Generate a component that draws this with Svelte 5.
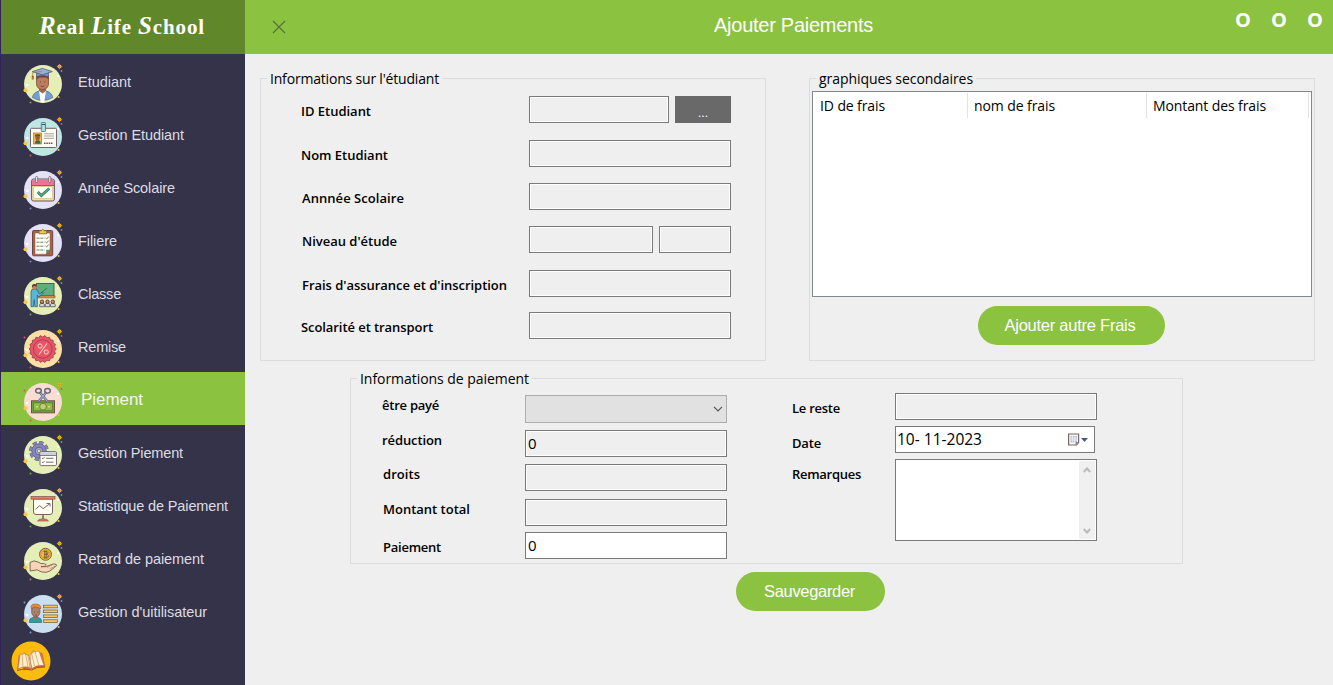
<script>
  // Tracks a run of text out or in so that it fills the given width.
  function fit(node, width) {
    const range = document.createRange();
    range.selectNodeContents(node);
    const natural = range.getBoundingClientRect().width;
    const gaps = node.textContent.length;
    node.style.letterSpacing = `${(width - natural) / gaps}px`;
  }

  const menu = [
    { icon: 'student', text: 'Etudiant', w: 53, bg: '#e6eeb7', dot: '#75a843' },
    { icon: 'card', text: 'Gestion Etudiant', w: 106, bg: '#c0e6e4', dot: '#e34b68' },
    { icon: 'calendar', text: 'Année Scolaire', w: 97, bg: '#e3e2f6', dot: '#8580b5' },
    { icon: 'clipboard', text: 'Filiere', w: 39, bg: '#e3e2f6', dot: '#8580b5' },
    { icon: 'teacher', text: 'Classe', w: 43, bg: '#e6eeb7', dot: '#75a843' },
    { icon: 'discount', text: 'Remise', w: 48, bg: '#fbdfa4', dot: '#e34b68' },
    { icon: 'cut', text: 'Piement', w: 62, bg: '#f9dcd3', dot: '#e34b68', active: true },
    { icon: 'gear', text: 'Gestion Piement', w: 105, bg: '#e6eeb7', dot: '#75a843' },
    { icon: 'chart', text: 'Statistique de Paiement', w: 150, bg: '#e6eeb7', dot: '#75a843' },
    { icon: 'coin', text: 'Retard de paiement', w: 126, bg: '#e6eeb7', dot: '#9b8b58' },
    { icon: 'user', text: "Gestion d'uitilisateur", w: 129, bg: '#cbdff3', dot: '#6e9bd6' }
  ];

  const seal = Array.from({ length: 36 }, (_, i) => {
    const r = i % 2 ? 12 : 13.6;
    const a = (i * Math.PI) / 18;
    return `${(20.7 + r * Math.cos(a)).toFixed(2)},${(21 + r * Math.sin(a)).toFixed(2)}`;
  }).join(' ');
</script>

{#snippet art(name)}
  {#if name === 'student'}
    <path d="M10.3 34.500q1-5 6.500-6.500h7.500q5.500 1.500 6.500 6.500a19 19 0 0 1-20.500 0z" fill="#739fd0" stroke="#57688f" stroke-width=".7" />
    <path d="M17 27.500h7l-1.800 12h-3.500z" fill="#fff" />
    <path d="M17 24h7v4l-3.500 2.500-3.500-2.500z" fill="#a9694b" />
    <rect x="14.500" y="11" width="12" height="15.500" rx="5.500" fill="#bd7c5b" stroke="#6f4435" stroke-width=".7" />
    <path d="M14.300 17v-5h12.500v5l-2-2.500h-8z" fill="#6d3f37" />
    <path d="M18 19h1M22.500 19h1M18.800 23q1.700 1 3.400 0" stroke="#5b3430" stroke-width=".8" fill="none" />
    <path d="M14.500 9.500v4q6-2 12 0v-4z" fill="#7f9bc5" stroke="#4e5b7c" stroke-width=".7" />
    <path d="M10.300 8.600l10-3.200 10 3.200-10 3.200z" fill="#96b0d6" stroke="#4e5b7c" stroke-width=".8" />
    <path d="M20 8.500l-9.300 1v4" fill="none" stroke="#a8773a" stroke-width=".7" /><rect x="10" y="13" width="1.700" height="3.200" fill="#c18b46" stroke="#71502f" stroke-width=".4" />
  {:else if name === 'card'}
    <rect x="8.500" y="12.300" width="26" height="19.200" rx="1" fill="#fffdf3" stroke="#74626a" />
    <rect x="19.300" y="6.500" width="4.200" height="9" rx=".8" fill="#a8dedd" stroke="#577681" stroke-width=".9" /><path d="M20 8.500h3" stroke="#335567" />
    <rect x="11.500" y="17" width="8" height="11" fill="#f3bc43" stroke="#8f6535" stroke-width=".6" />
    <path d="M13 27.800v-2l1.500-1.500h2.500l1.500 1.500v2z" fill="#396b62" /><ellipse cx="15.600" cy="21.500" rx="2.300" ry="3" fill="#9f5c3c" /><path d="M13.200 21v-2.500h5v2.500l-1-1.500h-3z" fill="#573630" />
    <path d="M22 17.800h10M22 20h10M22 22.300h10" stroke="#9b9692" stroke-width=".9" /><path d="M22 27.300h9" stroke="#675c60" stroke-width="1.400" stroke-dasharray="1.600 .7" />
  {:else if name === 'calendar'}
    <rect x="9.600" y="10" width="22.800" height="22" rx="2" fill="#f2e296" stroke="#695363" />
    <path d="M10 16.500v-4.500q0-2 2-2h18q2 0 2 2v4.500z" fill="#ec7496" /><path d="M10 16.500h22" stroke="#714e60" stroke-width=".8" />
    <rect x="11.500" y="17.500" width="19" height="12" rx="1.500" fill="#fffef6" stroke="#cab970" stroke-width=".6" />
    <rect x="13.700" y="7.500" width="2" height="6" rx="1" fill="#fff" stroke="#6c5460" stroke-width=".8" /><rect x="26.800" y="7.500" width="2" height="6" rx="1" fill="#fff" stroke="#6c5460" stroke-width=".8" />
    <path d="M15.800 23l3.500 3.500 8-7" fill="none" stroke="#466760" stroke-width="2.800" /><path d="M15.800 23l3.500 3.500 8-7" fill="none" stroke="#50b17b" stroke-width="1.600" />
  {:else if name === 'clipboard'}
    <rect x="10.500" y="8.500" width="20.200" height="25.300" rx="1.300" fill="#aa6246" stroke="#70443c" />
    <path d="M13 11h15v17l-4 4.200h-11z" fill="#fffef3" stroke="#785650" stroke-width=".5" /><path d="M24.500 32v-4h3.800z" fill="#629b78" stroke="#3d5f50" stroke-width=".4" />
    <path d="M17 11.800v-3h2q1.700-3 3.400 0h2.300v3z" fill="#eac94c" stroke="#80662f" stroke-width=".8" />
    <path d="M14.500 16.200h8M14.500 20.200h8M14.500 24.200h8M14.500 28h8" stroke="#6c6869" stroke-width=".9" stroke-dasharray="3 .8" /><path d="M23.500 16l1.200 1 2-2.500M23.500 20l1.200 1 2-2.500M23.500 24l1.200 1 2-2.500" fill="none" stroke="#645f62" stroke-width=".8" />
  {:else if name === 'teacher'}
    <rect x="14.500" y="8.500" width="17.500" height="12.500" fill="#5baf80" stroke="#4d6158" /><rect x="12.500" y="20.900" width="20.500" height="2" fill="#e79a4c" stroke="#684b39" stroke-width=".6" />
    <path d="M9 23v-6q0-3 3-3h2.500l3 5 3-2 .8 1.500-4.300 3.300-1.700-1.600v11.500h-2.500l-.6-7-.8 7h-2.400z" fill="#54b8d9" stroke="#365e7c" stroke-width=".8" /><path d="M19 18l6-5" stroke="#394d51" stroke-width=".7" />
    <circle cx="12.500" cy="12" r="2.500" fill="#c77b57" /><path d="M10 12.500q-.6-4 3-3.500 2 .2 2 2.400l-3-.7z" fill="#593b46" />
    {#each [20, 25.500, 30.800] as x}<path d="M{x - 2.300} 31.700v-2q0-1 1.200-1.200h2.300q1.200 0 1.200 1.200v2z" fill="#d8d8d8" stroke="#413f58" stroke-width=".7" /><circle cx={x} cy="26.700" r="1.700" fill="#d98f6b" stroke="#483343" stroke-width=".9" />{/each}
  {:else if name === 'discount'}
    <polygon points={seal} fill="#e95467" stroke="#8d3b50" stroke-width=".8" stroke-linejoin="round" /><circle cx="20.700" cy="21" r="9.300" fill="#eb5367" stroke="#9e344f" stroke-width=".8" />
    <path d="M17 26.500l8-11" stroke="#ffd8c5" stroke-width="1.100" /><circle cx="18" cy="18" r="2.100" fill="none" stroke="#ffd8c5" /><circle cx="24.200" cy="24" r="2.100" fill="none" stroke="#ffd8c5" />
  {:else if name === 'cut'}
    <rect x="9.500" y="19.800" width="23" height="12" fill="#729e44" stroke="#735245" /><rect x="11.500" y="21.800" width="19" height="8" fill="#8fbb49" stroke="#55752f" stroke-width=".7" /><circle cx="21" cy="25.700" r="3.300" fill="#c3ce70" stroke="#536f3a" stroke-width=".7" /><path d="M14 25.700h2M26 25.700h2" stroke="#d2da8e" stroke-width="1.500" />
    <path d="M16.500 20.500l8-9.500M25.500 20.500l-8-9.500" stroke="#555a76" stroke-width="2.300" /><path d="M16.500 20.500l8-9.500M25.500 20.500l-8-9.500" stroke="#a3bedf" stroke-width="1.100" />
    <ellipse cx="16.500" cy="9.800" rx="2.800" ry="2.300" fill="none" stroke="#666574" stroke-width="1.400" /><ellipse cx="25.500" cy="9.800" rx="2.800" ry="2.300" fill="none" stroke="#666574" stroke-width="1.400" />
  {:else if name === 'gear'}
    <circle cx="17" cy="17" r="8.500" fill="none" stroke="#575779" stroke-width="3" stroke-dasharray="4.200 2.475" /><circle cx="17" cy="17" r="7.300" fill="#8686bd" stroke="#575779" stroke-width=".8" /><circle cx="17" cy="17" r="8.400" fill="none" stroke="#8686bd" stroke-width="2.200" stroke-dasharray="3.500 3.097" stroke-dashoffset="-.3" />
    <circle cx="17" cy="17" r="3.800" fill="#aaa7d0" stroke="#575779" stroke-width=".8" /><circle cx="17" cy="17" r="1.700" fill="#dce6b0" stroke="#575779" stroke-width=".5" />
    <rect x="18" y="17.600" width="16.500" height="14" rx="1.300" fill="#fffdf3" stroke="#695d69" stroke-width=".9" /><path d="M18.500 18.200h15.500v3h-15.500z" fill="#c8d2da" /><path d="M18 21.500h16.500" stroke="#695d69" stroke-width=".8" />
    <path d="M20 24l1 .8 1.500-1.700M20 28l1 .8 1.500-1.700M24 24.300h7.500M24 28.200h7.500" fill="none" stroke="#665a65" stroke-width=".9" />
  {:else if name === 'chart'}
    <path d="M21 27v6.500" stroke="#7b5b58" stroke-width="1.500" /><path d="M15.500 34q1-2.200 5.500-2.200t5.500 2.200z" fill="#e6785d" stroke="#775049" stroke-width=".6" />
    <path d="M11.500 12h19v13q0 2.500-2.500 2.500h-14q-2.500 0-2.500-2.500z" fill="#fffef2" stroke="#776164" /><rect x="9" y="9.600" width="24" height="2.500" fill="#ea7b5f" stroke="#805349" stroke-width=".7" />
    <path d="M13.500 22.300l4.200-3.600 3.500 3 6.500-5M24.500 16.500h3.500v3" fill="none" stroke="#7c666a" />
  {:else if name === 'coin'}
    <circle cx="23.500" cy="14.300" r="6" fill="#f8bb37" stroke="#7d6445" stroke-width="1" /><circle cx="23.500" cy="14.300" r="4.500" fill="none" stroke="#b77f2e" stroke-width=".6" />
    <path d="M21.500 11.500h3q1.600.2 1.600 1.400t-1.600 1.400q2 .1 2 1.500t-1.800 1.500h-3.200M22.700 10.500v8M24.300 10.500v8M22 14.300h2.500" fill="none" stroke="#68503d" stroke-width=".8" />
    <path d="M8 22.500q4-3 8-.5l3 1.500q5-.2 5.300 1.700.2 1.600-5.300 1.500 6 .6 9-1.600 4.500-2.200 6.200-.6 1.300 1.300-2 3.200-4.500 4.200-8 4.600-5 .5-9-2.500l-7 1.200z" fill="#f6d4b5" stroke="#775b50" stroke-width=".9" />
    <path d="M25 27.500l5-2.600M28 29l5-3" stroke="#9a7562" stroke-width=".6" />
  {:else}
    <path d="M7.500 29.500v-2q0-2 3-3h6q3 1 3 3v2z" fill="#2b9f9a" stroke="#285e68" stroke-width=".6" /><path d="M11.500 22.500h4.500v3l-2.200 1.500-2.300-1.500z" fill="#9c715a" />
    <ellipse cx="13.800" cy="18.500" rx="4.200" ry="5.500" fill="#ad8067" stroke="#6b5149" stroke-width=".7" /><path d="M9.500 16.500q-2-5.500 4-5.500 6 0 5 5l-1-1-5-1-2 .7z" fill="#ee8a33" stroke="#8d5931" stroke-width=".6" />
    <path d="M12 19h1M15.500 19h1M13 22h2" stroke="#5b4440" stroke-width=".7" />
    {#each [12.200, 17, 21.900, 26.800] as y}<rect x="21.400" {y} width="14" height="2.600" fill="#f8c65d" stroke="#846740" stroke-width=".8" />{/each}
  {/if}
{/snippet}

{#snippet label(text, width)}<span class="label"><span use:fit={width}>{text}</span></span>{/snippet}

<div class="app">
  <aside>
    <div class="logo"><span use:fit={166}><i>R</i>eal <i>L</i>ife <i>S</i>chool</span></div>
    <nav>
      {#each menu as item}
        <div class="item" class:active={item.active}>
          <svg class="badge" width="44" height="44" viewBox="0 0 44 44">
            <circle cx="21" cy="21" r="19" fill={item.bg} />
            {#if item.icon === 'discount' || item.icon === 'cut' || item.icon === 'user'}<circle cx="2.500" cy="9.500" r="1" fill={item.dot} />{/if}
            <circle cx="37.500" cy="3.600" r="2" fill="#f3b51b" /><path d="M37.500.9v5.400M34.800 3.600h5.400" stroke="#d19b22" stroke-width=".8" />
            <circle cx="39.500" cy="8" r=".9" fill={item.dot} /><circle cx="3.500" cy="27.300" r="2" fill="#fbc64b" />
            <circle cx="5.200" cy="22" r="1.300" fill="#fff" /><circle cx="36" cy="13" r="1" fill="#fff" />
            <circle cx="8.500" cy="39.400" r="1" fill={item.dot} /><circle cx="36.600" cy="34" r="1" fill="#f3bd45" />
            {@render art(item.icon)}
          </svg>
          <span class="name"><span use:fit={item.w}>{item.text}</span></span>
        </div>
      {/each}
    </nav>
    <svg class="book" width="40" height="40" viewBox="0 0 40 40">
      <circle cx="20" cy="20" r="19.500" fill="#fbbc0d" />
      <path d="M6 29.500l1.500-15 3-.5 2 15.500 8-1.700 14-1.800-3-14-3-.8" fill="#d96e4c" />
      <path d="M7 28l2-14.500q5-2 9 1l3 13q-7-3.500-14 .5z" fill="#fff0c5" stroke="#b46942" stroke-width=".6" />
      <path d="M21 27.500l-3-13q4-5 10-4.500l5 14.500q-7-1-12 3z" fill="#fff3cf" stroke="#b46942" stroke-width=".6" />
      <path d="M11 13l1 13M14.500 13l2.500 13M20.500 12l3 13M24 10.500l4 14M12 11l5 3.500 2 12.500 1-15 2-3 3 2.500" fill="none" stroke="#d09462" stroke-width=".7" />
      <path d="M6 29.500q7-3 14.500-.5 6-4 13.500-3" fill="none" stroke="#8e3f34" stroke-width=".9" />
    </svg>
  </aside>

  <main>
    <header>
      <svg class="close" width="14" height="14" viewBox="0 0 14 14"><path d="M1 1l12 12M13 1L1 13" stroke="#53713a" stroke-width="1.100" /></svg>
      <h1><span use:fit={159}>Ajouter Paiements</span></h1>
      <div class="controls"><span>O</span><span>O</span><span>O</span></div>
    </header>

    <div class="top">
      <section class="group student">
        <h2><span use:fit={169}>Informations sur l'étudiant</span></h2>
        <div class="row">{@render label('ID Etudiant', 70)}<div class="field"></div><button class="more">...</button></div>
        <div class="row">{@render label('Nom Etudiant', 87)}<div class="field"></div></div>
        <div class="row inset">{@render label('Annnée Scolaire', 102)}<div class="field"></div></div>
        <div class="row inset">{@render label("Niveau d'étude", 95)}<div class="field"></div><div class="field short"></div></div>
        <div class="row inset">{@render label("Frais d'assurance et d'inscription", 205)}<div class="field"></div></div>
        <div class="row">{@render label('Scolarité et transport', 132)}<div class="field"></div></div>
      </section>

      <section class="group fees">
        <h2><span use:fit={154}>graphiques secondaires</span></h2>
        <div class="list">
          <div class="col"><span use:fit={65}>ID de frais</span></div>
          <div class="col"><span use:fit={81}>nom de frais</span></div>
          <div class="col"><span use:fit={113}>Montant des frais</span></div>
        </div>
        <button class="pill add"><span use:fit={131}>Ajouter autre Frais</span></button>
      </section>
    </div>

    <section class="group payment">
      <h2><span use:fit={169}>Informations de paiement</span></h2>
      <div class="left">
        <div class="row">{@render label('être payé', 57)}<div class="field select"><svg width="10" height="6" viewBox="0 0 10 6"><path d="M1 .8l4 4 4-4" fill="none" stroke="#555" stroke-width="1.200" /></svg></div></div>
        <div class="row">{@render label('réduction', 60)}<div class="field">0</div></div>
        <div class="row">{@render label('droits', 37)}<div class="field"></div></div>
        <div class="row">{@render label('Montant total', 87)}<div class="field"></div></div>
        <div class="row">{@render label('Paiement', 58)}<div class="field white">0</div></div>
      </div>
      <div class="right">
        <div class="row">{@render label('Le reste', 48)}<div class="field"></div></div>
        <div class="row">
          {@render label('Date', 29)}
          <div class="field white date">
            <span class="value"><span use:fit={85}>10- 11-2023</span></span>
            <svg width="22" height="14" viewBox="0 0 22 14"><path d="M.6 1h10v8.500l-2 2.500h-8z" fill="#f9f6f5" stroke="#7c6762" stroke-width="1.200" /><path d="M2.500 3h6.500v6.500h-6.500z" fill="#b2c4d7" /><path d="M2.500 5h6.500M2.500 7h6.500M4.700 3v6.500M6.800 3v6.500" stroke="#fff" stroke-width=".6" /><path d="M8 12v-2.500h2.500" fill="#ad9a93" stroke="#7c6762" stroke-width=".7" /><path d="M13 5h7l-3.500 4z" fill="#3f5e8c" /></svg>
          </div>
        </div>
        <div class="row">
          {@render label('Remarques', 69)}
          <div class="field white notes">
            <div class="scroll">
              <svg width="8" height="6" viewBox="0 0 8 6"><path d="M.8 5L4 1.500 7.200 5" fill="none" stroke="#b9b9b9" stroke-width="1.900" /></svg>
              <svg width="8" height="6" viewBox="0 0 8 6"><path d="M.8 1L4 4.500 7.200 1" fill="none" stroke="#b9b9b9" stroke-width="1.900" /></svg>
            </div>
          </div>
        </div>
      </div>
    </section>
    <button class="pill save"><span use:fit={91}>Sauvegarder</span></button>
  </main>
</div>

<style>
  :global(body) { margin: 0; overflow: hidden; }
  .app, .app * { box-sizing: border-box; }
  .app { display: flex; width: 1333px; height: 685px; background: #efefef; color: #000; font-family: "Open Sans", "Noto Sans", sans-serif; white-space: nowrap; }
  button { border: 0; padding: 0; font-family: "Liberation Sans", Arial, sans-serif; color: #fff; white-space: nowrap; }
  svg { display: block; flex: none; }

  aside { width: 245px; flex: none; background: #34334a; border-left: 1px solid #32235a; }
  .logo { height: 54px; padding: 2px 0 0 38px; background: #60882b; color: #fff; font: bold 21px/50px "Liberation Serif", serif; }
  .logo i { font-size: 25px; line-height: 1; }
  .item { display: flex; height: 53px; padding: 9px 0 0 21px; }
  .name { margin: 9px 0 0 12px; height: 20px; font: 14.500px/20px "Liberation Sans", Arial, sans-serif; color: #dcdce2; }
  .active { background: #8bc240; }
  .active .name { margin: 9px 0 0 15px; font-size: 17px; line-height: 19px; color: #f3f8e8; }
  .book { margin: 4px 0 0 10px; }

  main { flex: 1; display: flex; flex-direction: column; }
  header { display: flex; height: 54px; flex: none; background: #8bc240; color: #fff; padding-left: 27px; }
  .close { margin-top: 20px; }
  h1 { margin: 0 0 0 428px; width: 521px; font: 20px/50px "Liberation Sans", Arial, sans-serif; }
  .controls { display: flex; font: 700 20px/39px "Open Sans", sans-serif; }
  .controls span { width: 36px; flex: none; }

  .group { border: 1px solid #dcdcdc; height: 283px; }
  h2 { width: max-content; height: 20px; margin: -11px 0 0 6px; padding: 0 3px; background: #efefef; font-size: 14px; font-weight: 400; line-height: 21px; }
  .top { display: flex; gap: 43px; margin: 24px 0 0 15px; }
  .top .group { width: 506px; }

  .row { display: flex; gap: 6px; }
  .label { flex: none; height: 20px; font-size: 13px; font-weight: 600; line-height: 20px; }
  .field { flex: 1; height: 27px; border: 1px solid #7a7a7a; background: #efefef; box-shadow: inset 0 0 0 1px #fff; font-size: 15px; line-height: 25px; padding-left: 2px; }
  .white { background: #fff; }

  .student .row { padding: 0 34px 0 40px; margin-top: 16px; }
  .student .row:nth-of-type(1) { margin-top: 8px; }
  .student .row:nth-of-type(2), .student .row:nth-of-type(5) { margin-top: 17px; }
  .student .row:nth-of-type(6) { margin-top: 15px; }
  .student .label { width: 222px; margin-top: 5px; }
  .inset .label { padding-left: 1px; }
  .more { width: 56px; height: 27px; background: #696969; font-size: 12px; line-height: 27px; padding-top: 4px; }
  .short { flex: none; width: 72px; }

  .list { display: flex; width: 500px; height: 206px; margin: 3px 0 0 2px; padding: 1px 2px 0 0; background: #fff; border: 1px solid #828790; }
  .col { height: 25px; width: 162px; border-right: 1px solid #e2e2e2; padding-left: 6px; font-size: 14px; line-height: 25px; }
  .col:nth-child(1) { width: 155px; padding-left: 7px; }
  .col:nth-child(2) { width: 179px; }
  .pill { display: block; height: 39px; border-radius: 19.500px; background: #8bc240; font-size: 16.500px; line-height: 39px; }
  .add { width: 187px; margin: 9px 0 0 168px; padding-right: 3px; }

  .payment { width: 833px; height: 186px; margin: 17px 0 0 105px; display: grid; grid-template-columns: 376px 305px; grid-template-rows: 9px auto; align-content: start; column-gap: 65px; }
  .payment h2 { grid-column: 1 / 3; }
  .left { padding: 7px 0 0 31px; display: grid; row-gap: 7px; }
  .left .label { width: 137px; }
  .left .row:nth-child(n + 3) .label { padding-left: 1px; }
  .left .row:nth-child(4) { margin-top: 1px; }
  .left .row:nth-child(5) { margin-top: -1px; }
  .left .row:nth-child(5) .label { margin-top: 5px; }
  .select { height: 28px; border-color: #adadad; background: #e1e1e1; box-shadow: none; display: flex; align-items: center; justify-content: flex-end; padding-right: 3px; }
  .right { padding-top: 5px; display: grid; row-gap: 6px; align-content: start; }
  .right .label { width: 97px; margin-top: 5px; }
  .right .row:nth-child(2) .label { margin-top: 7px; }
  .date { margin-right: 2px; display: flex; justify-content: space-between; align-items: center; padding: 0 4px 0 1px; font-size: 15.500px; }
  .notes { height: 82px; padding: 1px; display: flex; justify-content: flex-end; }
  .scroll { width: 16px; background: #f0f0f0; display: flex; flex-direction: column; justify-content: space-between; align-items: center; padding: 6px 1px 5px 0; }
  .save { width: 149px; flex: none; margin: 8px 0 0 491px; padding-right: 2px; }
</style>
